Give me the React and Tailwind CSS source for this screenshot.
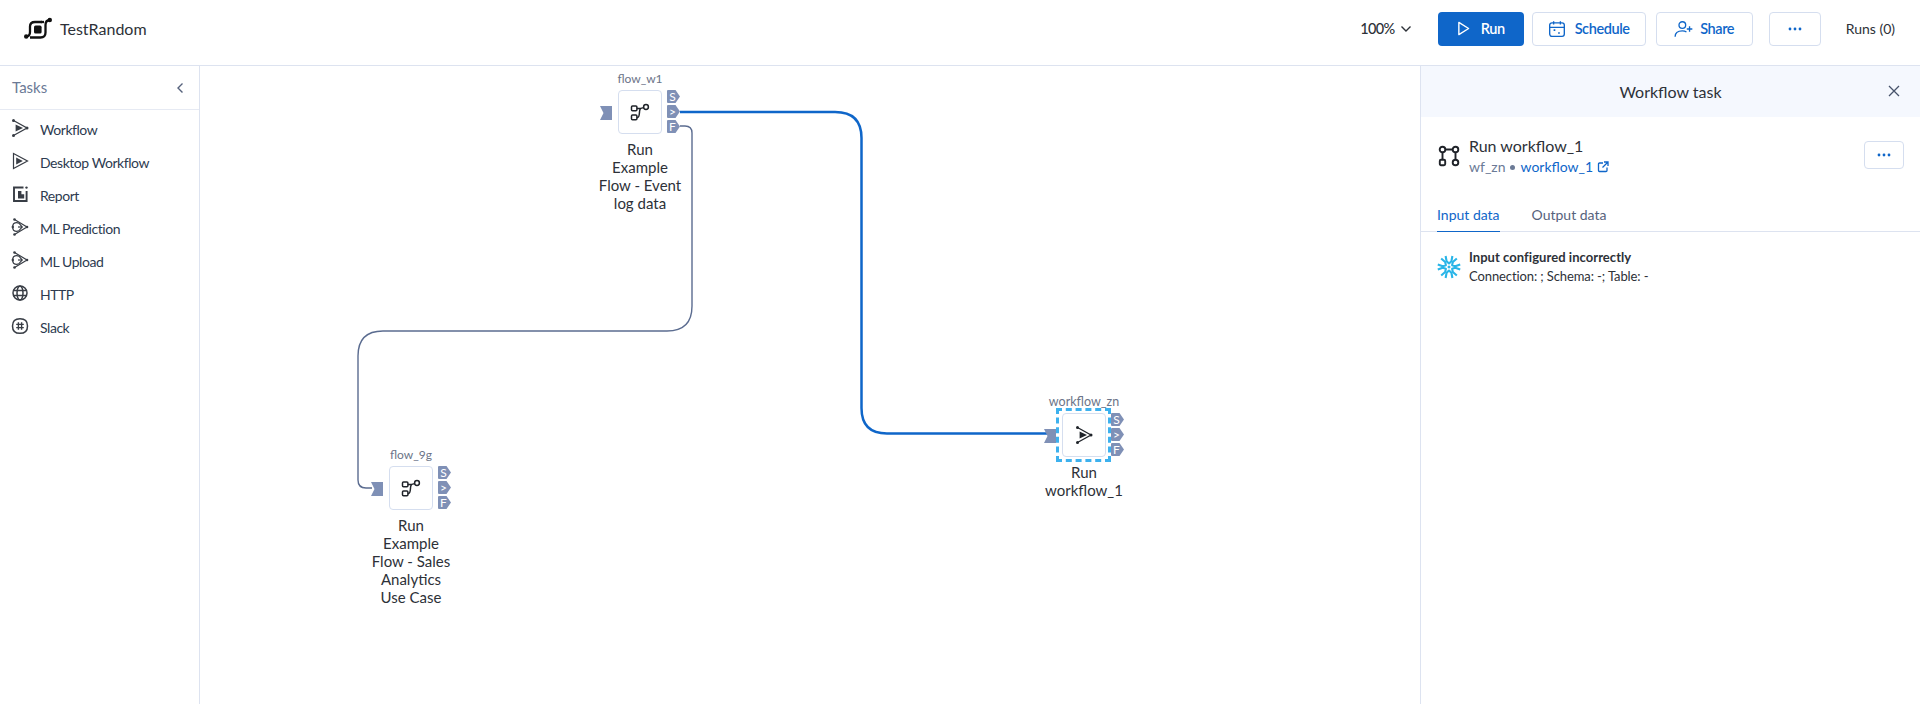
const font = { fontFamily: "Lato, 'Liberation Sans', sans-serif" };

function FlowIcon({ className = "w-5 h-5" }) {
  return (
    <svg viewBox="0 0 20 20" className={className} fill="none" stroke="#1f2329" strokeWidth="1.5">
      <rect x="1.5" y="4" width="5.4" height="4.8" rx="1" />
      <rect x="1.5" y="13" width="5.4" height="4.8" rx="1" />
      <circle cx="16" cy="5" r="2.4" />
      <path d="M6.9 6.4h3.6M13.6 5.6 L10.8 6.4 C10 6.8 9.8 7.6 9.6 9 C9.3 12 9.4 15.4 7.6 15.4H6.9" />
    </svg>
  );
}

function WorkflowIcon({ className = "w-5 h-5", color = "#1f2329" }) {
  return (
    <svg viewBox="0 0 20 20" className={className} fill="none" stroke={color} strokeWidth="1.3">
      <path d="M3.5 2.5 L17 10 L3.5 17.5" />
      <path d="M5.6 6.4 L13 10 L5.6 13.6 Z" fill={color} stroke="none" />
      <circle cx="3.5" cy="2.5" r="1.5" fill={color} stroke="none" />
      <circle cx="3.5" cy="17.5" r="1.5" fill={color} stroke="none" />
      <circle cx="17" cy="10" r="1.5" fill={color} stroke="none" />
    </svg>
  );
}

function DesktopIcon() {
  return (
    <svg viewBox="0 0 20 20" className="w-5 h-5" fill="none" stroke="#383d45" strokeWidth="1.2">
      <path d="M3.5 2.5 L17.5 10 L3.5 17.5 Z" />
      <path d="M6.2 6.6 L12.8 10 L6.2 13.4 Z" fill="#383d45" stroke="none" />
    </svg>
  );
}

function ReportIcon() {
  return (
    <svg viewBox="0 0 20 20" className="w-5 h-5" fill="none" stroke="#383d45" strokeWidth="1.9">
      <path d="M13.5 3.5H4v13.5h12.6V7" />
      <path d="M8 7h3.4v3.2h2.8V14.4H8z" fill="#383d45" stroke="none" />
      <circle cx="16.5" cy="3.6" r="1.2" fill="#383d45" stroke="none" />
    </svg>
  );
}

function MlIcon() {
  return (
    <svg viewBox="0 0 20 20" className="w-5 h-5" fill="none" stroke="#383d45" strokeWidth="1.2">
      <path d="M4.5 2.5 L17 10 L4.5 17.5" />
      <path d="M3.5 6.8 A5.4 5.4 0 0 1 9 6.2 L12.2 10 L8.8 13.8 A5.4 5.4 0 0 1 3.5 13.2 A6.4 6.4 0 0 1 3.5 6.8 Z" />
      <path d="M8 10H12.2" />
      <circle cx="4.5" cy="2.5" r="1.3" fill="#383d45" stroke="none" />
      <circle cx="4.5" cy="17.5" r="1.3" fill="#383d45" stroke="none" />
      <circle cx="17" cy="10" r="1.3" fill="#383d45" stroke="none" />
      <circle cx="2.8" cy="10" r="1.2" fill="#383d45" stroke="none" />
    </svg>
  );
}

function GlobeIcon() {
  return (
    <svg viewBox="0 0 20 20" className="w-5 h-5" fill="none" stroke="#383d45" strokeWidth="1.5">
      <circle cx="10" cy="10" r="7" />
      <ellipse cx="10" cy="10" rx="3" ry="7" />
      <path d="M3 7.6h14M3 12.4h14" />
    </svg>
  );
}

function SlackIcon() {
  return (
    <svg viewBox="0 0 20 20" className="w-5 h-5" fill="none" stroke="#383d45" strokeWidth="1.5">
      <path d="M10 2.7c5 0 7.5 2.6 7.5 7.2s-2.6 7.4-7.5 7.4c-5 0-7.5-2.8-7.5-7.4S5 2.7 10 2.7z" />
      <path d="M8.4 6.2v7.6M11.6 6.2v7.6M6.2 8.4h7.6M6.2 11.6h7.6" strokeWidth="1.4" />
    </svg>
  );
}

function LogoIcon() {
  return (
    <svg viewBox="0 0 28 23" className="w-7 h-[23px]" fill="none" stroke="#111" strokeWidth="2.3">
      <path d="M2 19.5 C4.5 19.5 6 18 6 15 V9.5 C6 6.5 8 5 11 5 H18" />
      <path d="M26 3 C23 3 21.5 5 21.5 8 V15.5 C21.5 18.5 19.5 20.5 16.5 20.5 H6" />
      <path d="M17 5 H20" />
      <rect x="10" y="8.6" width="7.6" height="8" rx="1.6" fill="#111" stroke="none" />
      <circle cx="2.2" cy="19.5" r="2.2" fill="#111" stroke="none" />
      <circle cx="25.8" cy="3" r="2.2" fill="#111" stroke="none" />
    </svg>
  );
}

function Snowflake() {
  const angles = [0, 60, 120, 180, 240, 300];
  return (
    <svg viewBox="0 0 24 24" className="w-6 h-6" fill="none" stroke="#29b5e8" strokeWidth="2.1" strokeLinecap="butt" strokeLinejoin="round">
      {angles.map((a) => (
        <g key={a} transform={`rotate(${a} 12 12)`}>
          <path d="M8.6 1 L9.6 6.2 L12 8.4 L14.4 6.2 L15.4 1" />
        </g>
      ))}
      <path d="M12 10.2 13.8 12 12 13.8 10.2 12Z" fill="#29b5e8" stroke="none" />
    </svg>
  );
}

function OutPort({ label }) {
  return (
    <div className="w-[13px] h-[13px] relative">
      <svg viewBox="0 0 13 13" className="absolute inset-0 w-[13px] h-[13px]">
        <path d="M1 0h7.5L13 6.5 8.5 13H1a1 1 0 0 1-1-1V1a1 1 0 0 1 1-1z" fill="#7f90b6" />
      </svg>
      <span className="absolute inset-0 pr-[2px] flex items-center justify-center text-[12px] leading-none text-white">{label}</span>
    </div>
  );
}

function InPort() {
  return (
    <svg viewBox="0 0 12 14" className="w-3 h-[14px] block">
      <path d="M0 0h12v14H0l3.5-7z" fill="#7f90b6" />
    </svg>
  );
}

function Node({ code, lines, left, top, icon, selected, codeClass = "text-[12px]" }) {
  return (
    <div className="absolute flex flex-col items-center w-[100px]" style={{ left, top }}>
      <div className={`leading-4 h-4 text-[#6b7488] whitespace-nowrap ${codeClass}`}>{code}</div>
      <div className="relative mt-[3px] w-11 h-11 rounded bg-white border border-[#d5deef] flex items-center justify-center">
        {icon}
        {selected && <div className="absolute -left-[7px] -right-[6px] -top-[6px] -bottom-[6px] border-[3px] border-dashed border-[#3db1ee]" />}
        <div className="absolute left-[-19px] top-[15px]"><InPort /></div>
        <div className="absolute left-[48px] top-[-1px] flex flex-col gap-[2px]">
          <OutPort label="S" />
          <OutPort label=">" />
          <OutPort label="F" />
        </div>
      </div>
      <div className="mt-[6px] text-[15px] leading-[18px] text-center text-[#2d3138]">
        {lines.map((l) => <div key={l} className="whitespace-nowrap">{l}</div>)}
      </div>
    </div>
  );
}

const tasks = [
  ["Workflow", <WorkflowIcon color="#383d45" />],
  ["Desktop Workflow", <DesktopIcon />],
  ["Report", <ReportIcon />],
  ["ML Prediction", <MlIcon />],
  ["ML Upload", <MlIcon />],
  ["HTTP", <GlobeIcon />],
  ["Slack", <SlackIcon />],
];

function Dots() {
  return (
    <svg viewBox="0 0 14 4" className="w-[14px] h-1" fill="#0f66c9">
      <circle cx="2" cy="2" r="1.4" /><circle cx="7" cy="2" r="1.4" /><circle cx="12" cy="2" r="1.4" />
    </svg>
  );
}

export default function App() {
  return (
    <div className="w-[1920px] h-[704px] bg-white flex flex-col overflow-hidden" style={font}>
      <header className="h-[66px] shrink-0 border-b border-[#dde3f0] flex items-center pb-[8px]">
        <div className="ml-[24px] mr-[8px]"><LogoIcon /></div>
        <div className="text-base text-[#2d3138]">TestRandom</div>
        <div className="ml-auto flex items-center text-[14.5px] font-semibold tracking-[-0.4px]">
          <div className="flex items-center gap-[5px] text-[#2d3138] font-medium mr-[26px] tracking-[-0.6px]">
            100%
            <svg viewBox="0 0 12 8" className="w-3 h-2" fill="none" stroke="#2d3138" strokeWidth="1.4"><path d="M1.5 1.5 6 6l4.5-4.5" /></svg>
          </div>
          <button className="w-[86px] h-[34px] rounded bg-[#0f66c9] text-white flex items-center justify-center gap-[11px]">
            <svg viewBox="0 0 14 16" className="w-[13px] h-[15px]" fill="none" stroke="#fff" strokeWidth="1.5"><path d="M2 1.5 12.5 8 2 14.5z" strokeLinejoin="round" /></svg>
            Run
          </button>
          <button className="ml-[8px] w-[114px] h-[34px] rounded border border-[#d5deef] text-[#0f66c9] flex items-center justify-center gap-[9px]">
            <svg viewBox="0 0 16 16" className="w-[18px] h-[18px]" fill="none" stroke="#0f66c9" strokeWidth="1.2"><rect x="1.5" y="2.5" width="13" height="12" rx="2" /><path d="M1.5 6.5h13M5 1v3M11 1v3" /><path d="M5 9h1.5M9 11.5h1.5" strokeWidth="1.4" /></svg>
            Schedule
          </button>
          <button className="ml-[10px] w-[97px] h-[34px] rounded border border-[#d5deef] text-[#0f66c9] flex items-center justify-center gap-[6px]">
            <svg viewBox="0 0 18 16" className="w-5 h-[18px]" fill="none" stroke="#0f66c9" strokeWidth="1.2"><circle cx="7.5" cy="4.5" r="3" /><path d="M1 15c0-3.5 2.8-5.3 6.5-5.3 1.5 0 2.7.3 3.7 1" /><path d="M14 5.5v5M11.5 8h5" /></svg>
            Share
          </button>
          <button className="ml-[16px] w-[52px] h-[34px] rounded border border-[#d5deef] flex items-center justify-center"><Dots /></button>
          <div className="ml-[25px] mr-[25px] whitespace-nowrap text-sm font-normal tracking-normal text-[#2d3138]">Runs (0)</div>
        </div>
      </header>

      <div className="flex-1 flex min-h-0">
        <aside className="w-[200px] shrink-0 border-r border-[#dde3f0]">
          <div className="h-[44px] border-b border-[#e6eaf3] flex items-center justify-between pl-3 pr-[15px]">
            <span className="text-[15px] text-[#6b7a96]">Tasks</span>
            <svg viewBox="0 0 8 12" className="w-2 h-3" fill="none" stroke="#56627c" strokeWidth="1.4"><path d="M6.5 1.5 2 6l4.5 4.5" /></svg>
          </div>
          <div className="pt-[3px]">
            {tasks.map(([t, i], k) => (
              <div key={k} className="h-[33px] flex items-center pl-[10px] gap-[10px] text-sm tracking-[-0.45px] text-[#2d3b50]">
                <div className="mb-[4px]">{i}</div>
                <span>{t}</span>
              </div>
            ))}
          </div>
        </aside>

        <main className="flex-1 relative">
          <svg className="absolute inset-0 w-full h-full" fill="none">
            <path d="M480 46 H635 Q661.5 46 661.5 72 V342 Q661.5 367.5 687 367.5 H848" stroke="#0f66c9" strokeWidth="2.5" />
            <path d="M480 60 H485 Q492 60 492 67 V240 Q492 265 467 265 H183 Q158 265 158 290 V414 Q158 422 166 422 H172" stroke="#5b6c90" strokeWidth="1.4" />
          </svg>
          <Node code="flow_w1" left={390} top={5} icon={<FlowIcon />} lines={["Run", "Example", "Flow - Event", "log data"]} />
          <Node code="flow_9g" left={161} top={381} icon={<FlowIcon />} lines={["Run", "Example", "Flow - Sales", "Analytics", "Use Case"]} />
          <Node code="workflow_zn" left={834} top={328} selected codeClass="text-[12.5px]" icon={<WorkflowIcon />} lines={["Run", "workflow_1"]} />
        </main>

        <aside className="w-[500px] shrink-0 border-l border-[#dde3f0]">
          <div className="h-[51px] bg-[#f5f8fe] relative flex items-center justify-center text-base text-[#2d3138]">
            Workflow task
            <svg viewBox="0 0 12 12" className="absolute right-[20px] top-[19px] w-3 h-3" fill="none" stroke="#47536b" strokeWidth="1.3"><path d="M1 1l10 10M11 1 1 11" /></svg>
          </div>
          <div className="h-[64px] mt-[19px] flex items-start pl-[17px] pr-4">
            <svg viewBox="0 0 22 22" className="w-[22px] h-[22px] mt-[9px]" fill="none" stroke="#1f2329" strokeWidth="1.9">
              <circle cx="4.5" cy="4.5" r="2.8" /><circle cx="17.5" cy="4.5" r="2.8" /><circle cx="17.5" cy="17.5" r="2.8" />
              <rect x="1.8" y="14.8" width="5.4" height="5.4" rx="1.2" />
              <path d="M7.3 4.5h7.4M4.5 7.3v7.5M17.5 7.3v7.5" />
            </svg>
            <div className="ml-[9px] flex-1">
              <div className="text-base leading-5 text-[#2d3138]">Run workflow_1</div>
              <div className="flex items-center text-sm leading-5 mt-[1px]">
                <span className="text-[#6b7a96]">wf_zn</span>
                <span className="w-[5px] h-[5px] rounded-full bg-[#6b7a96] mx-[5px]" />
                <span className="text-[#0f66c9]">workflow_1</span>
                <svg viewBox="0 0 12 12" className="w-3 h-3 ml-1" fill="none" stroke="#0f66c9" strokeWidth="1.3"><path d="M6 2H2.5A1 1 0 0 0 1.5 3v6.5a1 1 0 0 0 1 1H9a1 1 0 0 0 1-1V6.5M7 1h4v4M11 1 5.5 6.5" /></svg>
              </div>
            </div>
            <button className="mt-[5px] w-10 h-7 rounded border border-[#d5deef] flex items-center justify-center"><Dots /></button>
          </div>
          <div className="h-[32px] border-b border-[#dde3f0] flex pl-4 gap-8 text-sm">
            <div className="h-[32px] pt-[5px] text-[#0f66c9] border-b border-[#0f66c9]">Input data</div>
            <div className="pt-[5px] text-[#56627c]">Output data</div>
          </div>
          <div className="flex pl-4 pt-[23px] gap-2">
            <Snowflake />
            <div className="text-[13px] leading-[19px] text-[#2d3138] -mt-[7px]">
              <div className="font-bold tracking-[0.05px]">Input configured incorrectly</div>
              <div className="tracking-[-0.1px]">Connection: ; Schema: -; Table: -</div>
            </div>
          </div>
        </aside>
      </div>
    </div>
  );
}
